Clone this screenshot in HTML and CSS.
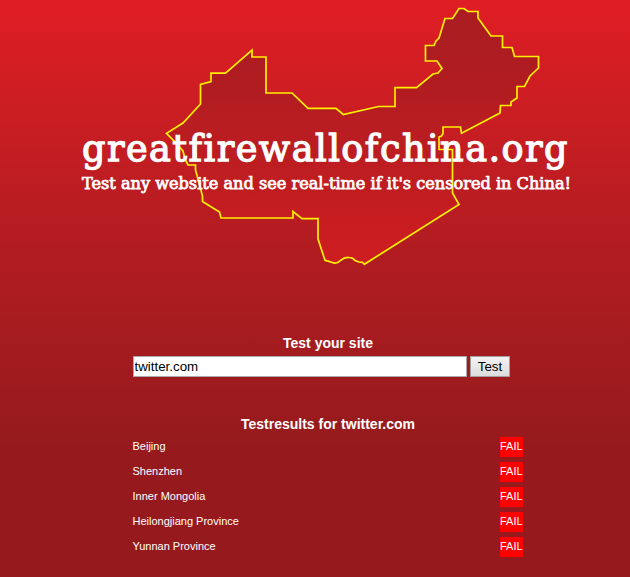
FILE: index.html
```
<!DOCTYPE html>
<html lang="en">
<head>
<meta charset="utf-8">
<title>greatfirewallofchina.org</title>
<link rel="stylesheet" href="styles.css">
</head>
<body>
<header class="banner">
<svg class="logo" width="630" height="280" viewBox="0 0 630 280">
  <defs>
    <linearGradient id="land" x1="0" y1="0" x2="0" y2="1">
      <stop offset="0" stop-color="#aa1d22"/>
      <stop offset="0.3" stop-color="#b01c20"/>
      <stop offset="0.42" stop-color="#b71d21"/>
      <stop offset="0.7" stop-color="#c01d21"/>
      <stop offset="0.9" stop-color="#cb1d21"/>
      <stop offset="1" stop-color="#cd1d21"/>
    </linearGradient>
  </defs>
  <path class="map" d="M252 50V57H266V93H292L308 108.300H336L343.300 114.500L378.500 106.500H395V87.700H416.500L433 74L438 73L442 68.500L437 61H425.500V45.500H434L436 41L439 38L445 18.500H452.500L459 8.500H464L468 11.500H478V18L491 36H502.500V47.500H512L514.500 56.500H538.500V68L530 76L524.500 86.500H517V98L511 102V105.500H500.500L500 113L461.500 133.300L460.500 127H443V133.500L441.500 136L439 137V149.500H452.500V193L459 204.500L364.300 264.300L362.500 262.300L359 262L355 260.500C353 257.500 351 257.500 349 257.500C342 257 341 261 337 262.800C333 264 332 261.500 325 260.300L318 239V218.700H302L293 211.500V218H221L219.500 212L202.500 201.500V196L195.500 170V165H188L185 159L183 151L176 143L166.500 133.300L183 123L200.500 104V84.500L211 81.500V73.200H225.500Z"/>
  <text class="site-name" x="82" y="161" textLength="487" lengthAdjust="spacingAndGlyphs">greatfirewallofchina.org</text>
  <text class="tagline" x="82" y="189" textLength="489" lengthAdjust="spacingAndGlyphs">Test any website and see real-time if it's censored in China!</text>
</svg>
</header>
<main class="content">
  <h2 class="heading">Test your site</h2>
  <form class="search">
    <input class="url" type="text" value="twitter.com">
    <button class="submit" type="button">Test</button>
  </form>
  <h2 class="heading">Testresults for twitter.com</h2>
  <ul class="results">
    <li class="row"><span class="place">Beijing</span><span class="fail">FAIL</span></li>
    <li class="row"><span class="place">Shenzhen</span><span class="fail">FAIL</span></li>
    <li class="row"><span class="place">Inner Mongolia</span><span class="fail">FAIL</span></li>
    <li class="row"><span class="place">Heilongjiang Province</span><span class="fail">FAIL</span></li>
    <li class="row"><span class="place">Yunnan Province</span><span class="fail">FAIL</span></li>
  </ul>
</main>
</body>
</html>
```

FILE: styles.css
```
* { box-sizing: border-box; }
body {
  margin: 0;
  height: 577px;
  overflow: hidden;
  background: linear-gradient(#e01d24 0, #ce1e23 90px, #b31c21 240px, #9c1b1e 400px, #961a1d 450px, #961a1d 577px);
  color: #fff;
  font-family: "Liberation Sans", Arial, sans-serif;
}
.logo { display: block; }
.map { fill: url(#land); stroke: #fff000; stroke-width: 1.7; }
.site-name, .tagline {
  font-family: "DejaVu Serif", serif;
  font-variant-ligatures: none;
  fill: #fff;
  stroke: #fff;
}
.site-name { font-size: 37px; letter-spacing: 1.5px; stroke-width: 1.3; }
.tagline { font-size: 16px; stroke-width: 0.75; }
.content {
  width: 391px;
  margin: 54px 0 0 132px;
}
.heading {
  margin: 0;
  padding-left: 1px;
  font-size: 14px;
  line-height: 18px;
  text-align: center;
}
.search {
  display: flex;
  gap: 3px;
  margin: 4px 0 38px 1px;
}
.url {
  width: 334px;
  height: 21px;
  padding: 0 0 0 0.5px;
  border: 1px solid #a9a9a9;
  background: #fff;
  color: #000;
  font: 13.33px "Liberation Sans", Arial, sans-serif;
}
.submit {
  width: 40px;
  height: 21px;
  padding: 0;
  border: 1px solid #a0a0a0;
  background: linear-gradient(#f3f3f3, #dcdcdc);
  color: #000;
  font: 13.33px "Liberation Sans", Arial, sans-serif;
}
.results {
  display: grid;
  gap: 5px;
  margin: 4px 0 0;
  padding: 0;
  list-style: none;
  font-size: 11px;
}
.row {
  display: flex;
  justify-content: space-between;
  height: 20px;
  line-height: 19px;
}
.place { padding-left: 0.5px; }
.fail { width: 23px; background: #f00; white-space: nowrap; }
```
